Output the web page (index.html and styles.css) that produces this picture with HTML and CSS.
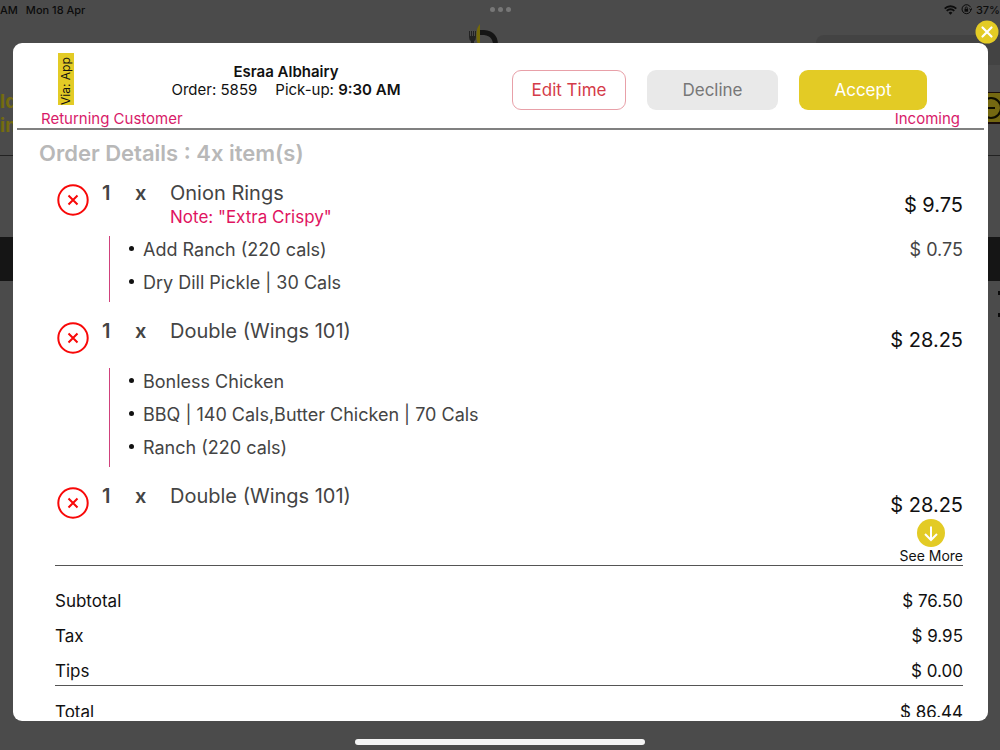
FILE: index.html
```html
<!DOCTYPE html>
<html lang="en">
<head>
<meta charset="utf-8">
<title>Order 5859</title>
<link rel="stylesheet" href="styles.css">
</head>
<body>
<div class="screen">
  <div class="status-bar">
    <div class="status-left"><span>AM</span><span>Mon 18 Apr</span></div>
    <div class="dots"><i></i><i></i><i></i></div>
    <div class="status-right">
      <svg width="13" height="10" viewBox="0 0 13 10" fill="none" stroke="#0c0c0c" stroke-width="1.8"><path d="M.7 3.6a8.3 8.3 0 0 1 11.6 0M2.7 5.8a5.4 5.4 0 0 1 7.6 0"/><path d="M6.500 9.700 4.600 7.700a2.700 2.700 0 0 1 3.800 0z" fill="#0c0c0c" stroke="none"/></svg>
      <svg width="11" height="11" viewBox="0 0 11 11" fill="none" stroke="#0c0c0c"><path d="M9.600 3.300A4.500 4.500 0 1 0 10 5.600M8.300 4.700l1.700 1.300.9-1.800"/><rect x="3.500" y="4.900" width="3.600" height="2.800" fill="#0c0c0c" stroke="none"/><path d="M4.300 5V3.900a1 1 0 0 1 2 0V5" stroke-width=".8"/></svg>
      <span>37%</span>
    </div>
  </div>
  <div class="app-header">
    <svg class="logo" width="32" height="30" viewBox="0 0 32 30"><path d="M1 7v6q0 3 2 4v10h3V17q2-1 2-4V7H7v5H6V7H5v5H4V7H3v5H2V7z" fill="#222"/><path d="M12 0c-4 4-4 11-3 18l3 4z" fill="#746908"/><path d="M12 6h4q15 1 14 18h-5q1-12-9-13h-4z" fill="#151515"/></svg>
    <div class="search"></div>
  </div>
  <div class="app-bar">
    <div class="app-title">ld<br>in</div>
    <div class="app-tab"><span>s</span><svg width="20" height="26" viewBox="0 0 20 26" fill="none" stroke="#0e0d00" stroke-width="2"><circle cx="11" cy="13" r="10"/><path d="M7 13h8"/></svg></div>
  </div>
  <div class="app-band"></div>
  <div class="app-rows"><i></i><i></i></div>
</div>

<main class="modal">
  <header class="modal-header">
    <div class="header-top">
      <div class="via">Via: App</div>
      <div class="info">
        <h1>Esraa Albhairy</h1>
        <div class="info-line"><span>Order: 5859</span><span>Pick-up: <b>9:30 AM</b></span></div>
      </div>
      <div class="actions">
        <button class="btn edit">Edit Time</button>
        <button class="btn decline">Decline</button>
        <button class="btn accept">Accept</button>
      </div>
    </div>
    <div class="header-tags"><span>Returning Customer</span><span>Incoming</span></div>
  </header>

  <div class="modal-body">
    <h2>Order Details : 4x item(s)</h2>
    <section class="items">
      <article class="item">
        <div class="item-head">
          <button class="remove" aria-label="Remove Onion Rings"><svg width="32" height="32" viewBox="0 0 32 32"><circle cx="16" cy="16" r="14.700"/><path d="M11.500 11.500l9 9M20.500 11.500l-9 9"/></svg></button>
          <b class="qty">1</b><b class="times">x</b>
          <div class="name">Onion Rings<div class="note">Note: "Extra Crispy"</div></div>
          <span class="price">$ 9.75</span>
        </div>
        <ul class="options">
          <li><span>Add Ranch (220 cals)</span><span>$ 0.75</span></li>
          <li><span>Dry Dill Pickle | 30 Cals</span></li>
        </ul>
      </article>
      <article class="item">
        <div class="item-head">
          <button class="remove" aria-label="Remove Double (Wings 101)"><svg width="32" height="32" viewBox="0 0 32 32"><circle cx="16" cy="16" r="14.700"/><path d="M11.500 11.500l9 9M20.500 11.500l-9 9"/></svg></button>
          <b class="qty">1</b><b class="times">x</b>
          <div class="name">Double (Wings 101)</div>
          <span class="price">$ 28.25</span>
        </div>
        <ul class="options">
          <li><span>Bonless Chicken</span></li>
          <li><span>BBQ | 140 Cals,Butter Chicken | 70 Cals</span></li>
          <li><span>Ranch (220 cals)</span></li>
        </ul>
      </article>
      <article class="item">
        <div class="item-head">
          <button class="remove" aria-label="Remove Double (Wings 101)"><svg width="32" height="32" viewBox="0 0 32 32"><circle cx="16" cy="16" r="14.700"/><path d="M11.500 11.500l9 9M20.500 11.500l-9 9"/></svg></button>
          <b class="qty">1</b><b class="times">x</b>
          <div class="name">Double (Wings 101)</div>
          <span class="price">$ 28.25</span>
        </div>
      </article>
      <button class="see-more">
        <svg width="28" height="28" viewBox="0 0 28 28"><circle cx="14" cy="14" r="14" fill="#e3cb25"/><path d="M14 7.500v13M8 15l6 6 6-6" fill="none" stroke="#fff" stroke-width="2"/></svg>
        <span>See More</span>
      </button>
    </section>
    <dl class="totals">
      <div><dt>Subtotal</dt><dd>$ 76.50</dd></div>
      <div><dt>Tax</dt><dd>$ 9.95</dd></div>
      <div><dt>Tips</dt><dd>$ 0.00</dd></div>
      <div class="total"><dt>Total</dt><dd>$ 86.44</dd></div>
    </dl>
  </div>
</main>
<button class="close" aria-label="Close"><svg width="24" height="24" viewBox="0 0 24 24"><circle cx="12" cy="12" r="11.500" fill="#e3cb25"/><path d="M7.500 7.500l9 9M16.500 7.500l-9 9" stroke="#fff" stroke-width="2.200" stroke-linecap="round"/></svg></button>
<div class="home-indicator"></div>
</body>
</html>
```
FILE: styles.css
```css
* { box-sizing: border-box; margin: 0; padding: 0; }
body {
  min-height: 100vh;
  background: #4b4b4b;
  color: #111;
  font-family: Inter, "Liberation Sans", sans-serif;
  overflow: hidden;
}
button { font: inherit; color: inherit; background: none; border: 0; cursor: pointer; }
svg { display: block; }

/* Dimmed page behind the dialog */
.status-bar {
  display: grid;
  grid-template-columns: 1fr auto 1fr;
  align-items: center;
  height: 19px;
  font-size: 11px;
  font-weight: 500;
  color: #0c0c0c;
}
.status-left { display: flex; gap: 8px; }
.status-right { display: flex; justify-content: flex-end; align-items: center; gap: 4px; }
.dots { display: flex; gap: 3px; }
.dots i { width: 5px; height: 5px; border-radius: 50%; background: #777; }
.app-header {
  display: grid;
  grid-template-columns: 1fr auto 1fr;
  height: 71px;
}
.logo { grid-column: 2; margin: 5px 32px 0 0; }
.search {
  grid-column: 3;
  justify-self: end;
  width: 184px;
  height: 30px;
  margin-top: 16px;
  border-radius: 8px 0 0 8px;
  background: #434343;
}
.app-bar {
  display: flex;
  justify-content: space-between;
  height: 66px;
  border-bottom: 1px solid #222;
}
.app-title { font-size: 19px; line-height: 24px; font-weight: 700; color: #746b10; }
.app-tab {
  display: flex;
  align-items: center;
  height: 32px;
  margin-top: 2px;
  border: solid #1b0d0a;
  border-width: 1px 0 2px;
  background: #746811;
  font-size: 16px;
}
.app-band { height: 44px; margin-top: 81px; background: #151515; }
.app-rows { display: flex; flex-direction: column; align-items: flex-end; gap: 18px; padding-top: 10px; }
.app-rows i { width: 2px; height: 4px; background: #0c0c0c; }

/* Order dialog */
.modal {
  position: fixed;
  inset: 43px 12px 29px 13px;
  display: flex;
  flex-direction: column;
  padding-bottom: 4px;
  border-radius: 9px;
  background: #fff;
}
.modal-header {
  margin: 0 4px;
  padding: 10px 24px 0;
  border-bottom: 2px solid #808080;
}
.header-top { display: flex; align-items: flex-start; height: 57px; padding-left: 17px; }
.via {
  width: 16px;
  height: 52px;
  line-height: 16px;
  background: #e3cb25;
  font-size: 12px;
  text-align: left;
  writing-mode: vertical-rl;
  transform: rotate(180deg);
}
.info { flex: 1; padding: 10px 14px 0 0; text-align: center; font-size: 15px; line-height: 18px; }
.info h1 { font-size: 15px; line-height: 18px; font-weight: 600; }
.info b { font-weight: 600; }
.info-line { display: flex; justify-content: center; gap: 18px; }
.actions { display: flex; gap: 21px; margin: 17px 33px 0 0; }
.btn { height: 40px; border-radius: 9px; font-size: 17px; }
.edit { width: 114px; border: 1px solid #e8a0a8; color: #d43b48; }
.decline { width: 131px; background: #e9e9e9; color: #777; }
.accept { width: 128px; background: #e3cb25; color: #fff; }
.header-tags {
  display: flex;
  justify-content: space-between;
  font-size: 15px;
  line-height: 18px;
  color: #d81b69;
}

.modal-body { flex: 1; min-height: 0; padding: 0 25px 0 42px; overflow: hidden; }
h2 {
  margin-left: -16px;
  padding: 9px 0 14px;
  font-size: 22px;
  line-height: 28px;
  font-weight: 600;
  color: #b8b8b8;
}
.items {
  position: relative;
  padding-bottom: 39px;
  border-bottom: 1px solid #555;
  color: #444;
}
.item + .item { margin-top: 17px; }
.item-head {
  display: grid;
  grid-template-columns: 45px 33px 35px 1fr auto;
  align-items: start;
  min-height: 42px;
  padding-left: 2px;
  font-size: 20px;
  line-height: 24px;
}
.remove { width: 32px; height: 32px; margin-top: 3px; }
.remove svg { fill: none; stroke: #f80808; stroke-width: 2; }
.qty, .times { font-weight: 600; }
.note { font-size: 17px; color: #e0145f; }
.price { align-self: center; color: #111; font-size: 20px; }
.options {
  margin: 7px 0 0 54px;
  border-left: 1px solid #d0417c;
  list-style: none;
  font-size: 18px;
  line-height: 27px;
}
.options li { display: flex; height: 33px; padding-left: 19px; }
.options li::before {
  content: "";
  flex: none;
  width: 5px;
  height: 5px;
  margin: 10px 9px 0 0;
  border-radius: 50%;
  background: #111;
}
.options span + span { margin-left: auto; }
.see-more {
  position: absolute;
  right: 0;
  bottom: 0;
  display: flex;
  flex-direction: column;
  align-items: center;
  color: #111;
  font-size: 14px;
  line-height: 18px;
}
.totals { padding-top: 21px; font-size: 17px; line-height: 28px; }
.totals div { display: flex; justify-content: space-between; margin-bottom: 7px; }
.totals .total { margin-top: -7px; padding-top: 12px; border-top: 1px solid #555; }

.close { position: fixed; top: 20px; right: 1px; width: 24px; height: 24px; }
.home-indicator {
  position: fixed;
  bottom: 5px;
  left: 50%;
  width: 290px;
  height: 6px;
  margin-left: -145px;
  border-radius: 3px;
  background: #f4f4f4;
}
```
